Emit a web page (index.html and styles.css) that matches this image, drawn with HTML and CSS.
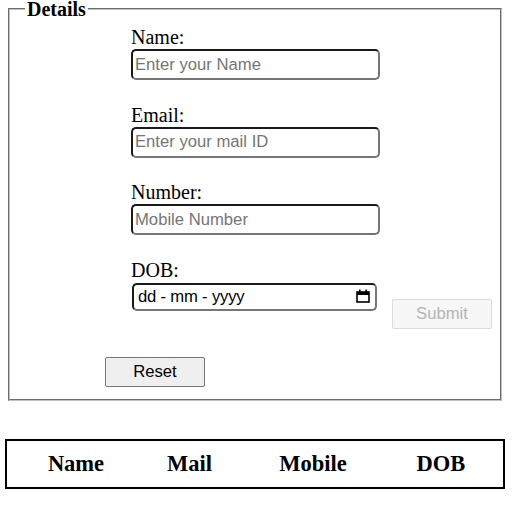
FILE: index.html
```html
<!DOCTYPE html>
<html lang="en">
<head>
<meta charset="utf-8">
<title>Details</title>
<link rel="stylesheet" href="styles.css">
</head>
<body>
<form class="form">
  <fieldset class="details">
    <legend class="legend">Details</legend>
    <div class="fields">
      <div class="field">
        <label class="label" for="name">Name:</label>
        <input class="text-input" id="name" type="text" placeholder="Enter your Name">
      </div>
      <div class="field">
        <label class="label" for="mail">Email:</label>
        <input class="text-input" id="mail" type="text" placeholder="Enter your mail ID">
      </div>
      <div class="field">
        <label class="label" for="mobile">Number:</label>
        <input class="text-input" id="mobile" type="text" placeholder="Mobile Number">
      </div>
      <div class="field">
        <label class="label" for="dob">DOB:</label>
        <div class="dob-row">
          <div class="date-field" id="dob">
            <span class="date-text">dd - mm - yyyy</span>
            <svg class="cal-icon" width="14" height="14" viewBox="0 0 14 14" aria-hidden="true">
              <rect x="1" y="3" width="12" height="10" fill="none" stroke="#000" stroke-width="1.6"/>
              <rect x="1" y="3" width="12" height="3" fill="#000"/>
              <rect x="3" y="0.5" width="1.6" height="3" fill="#000"/>
              <rect x="9.4" y="0.5" width="1.6" height="3" fill="#000"/>
            </svg>
          </div>
          <button class="btn submit" type="submit" disabled>Submit</button>
        </div>
      </div>
    </div>
    <div class="actions">
      <button class="btn reset" type="reset">Reset</button>
    </div>
  </fieldset>
</form>
<table class="records">
  <thead>
    <tr>
      <th class="col-name">Name</th>
      <th class="col-mail">Mail</th>
      <th class="col-mobile">Mobile</th>
      <th class="col-dob">DOB</th>
    </tr>
  </thead>
</table>
</body>
</html>
```

FILE: styles.css
```css
html, body {
  margin: 0;
  padding: 0;
  background: #fff;
}

body {
  font-family: "Liberation Serif", "Times New Roman", serif;
  color: #000;
}

.form {
  margin: 0;
}

.details {
  box-sizing: border-box;
  width: 494px;
  margin: 0 0 0 8px;
  padding: 8px 15px 12px 15px;
  border: 2px groove rgb(192, 192, 192);
  min-width: 0;
}

.legend {
  padding: 0 2px;
  font-size: 20px;
  font-weight: bold;
  line-height: 18px;
}

.fields {
  margin-left: 106px;
  display: flex;
  flex-direction: column;
  gap: 23.5px;
}

.field {
  display: flex;
  flex-direction: column;
  align-items: flex-start;
}

.label {
  font-size: 20px;
  line-height: 23px;
}

.text-input {
  box-sizing: border-box;
  width: 249px;
  height: 31px;
  margin: 0;
  padding: 0 2px;
  border: 2px solid #767676;
  border-top-color: #1a1a1a;
  border-left-color: #1a1a1a;
  border-radius: 5px;
  font-family: "Liberation Sans", Arial, sans-serif;
  font-size: 16.67px;
  color: #000;
  background: #fff;
  outline: none;
}

.text-input::placeholder {
  color: #757575;
}

.dob-row {
  display: flex;
  align-items: flex-start;
}

.date-field {
  box-sizing: border-box;
  width: 245px;
  height: 28px;
  margin: 1px 0 0 1px;
  padding: 0 5px 0 4px;
  border: 2px solid #767676;
  border-top-color: #1a1a1a;
  border-left-color: #1a1a1a;
  border-radius: 5px;
  display: flex;
  align-items: center;
  justify-content: space-between;
  background: #fff;
}

.date-text {
  font-family: "Liberation Sans", Arial, sans-serif;
  font-size: 16.67px;
  letter-spacing: -0.2px;
  color: #000;
}

.cal-icon {
  display: block;
  margin-top: -1px;
}

.btn {
  box-sizing: border-box;
  width: 100px;
  height: 30px;
  margin: 0;
  padding: 0;
  font-family: "Liberation Sans", Arial, sans-serif;
  font-size: 16.67px;
  border-radius: 2px;
}

.submit {
  margin: 17px 0 0 15px;
  background: #f7f7f7;
  border: 1px solid #dcdcdc;
  color: #b4b4b4;
}

.actions {
  margin: 28px 0 0 80px;
  display: flex;
}

.reset {
  background: #efefef;
  border: 1px solid #767676;
  color: #000;
}

.records {
  box-sizing: border-box;
  width: 500px;
  height: 50px;
  margin: 38px 0 0 5px;
  border: 2px solid #000;
  border-collapse: separate;
  border-spacing: 0;
  table-layout: fixed;
}

.records th {
  padding: 0;
  font-size: 22.5px;
  font-weight: bold;
  text-align: center;
  vertical-align: middle;
  line-height: 26px;
}

.col-name { width: 138px; }
.col-mail { width: 89px; }
.col-mobile { width: 158px; }
.records .col-dob { width: 98px; padding-right: 13px; }
```
